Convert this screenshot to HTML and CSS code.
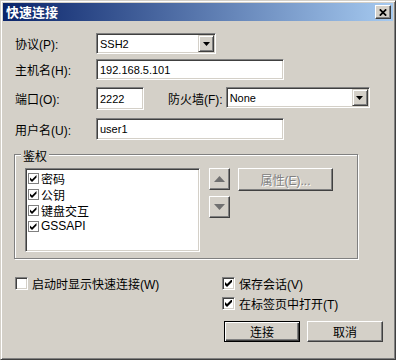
FILE: index.html
```html
<!DOCTYPE html>
<html lang="zh-CN">
<head>
    <meta charset="UTF-8">
    <title>快速连接</title>
    <link rel="stylesheet" href="styles.css">
</head>
<body>

    <div class="window">
        <div class="titlebar">
            <span class="title">快速连接</span>
            <button class="close">
                <svg width="8" height="7" viewBox="0 0 8 7"><path d="M0.8 0.3 L7.2 6.7 M7.2 0.3 L0.8 6.7" stroke="#000" stroke-width="1.7"/></svg>
            </button>
        </div>

        <div class="dialog">
            <div class="row row-protocol">
                <label class="lbl">协议(P):</label>
                <div class="combo combo-protocol">
                    <span class="combo-text">SSH2</span>
                    <span class="combo-btn"><svg width="7" height="4" viewBox="0 0 7 4"><path d="M0 0 H7 L3.5 4 Z" fill="#000"/></svg></span>
                </div>
            </div>

            <div class="row row-host">
                <label class="lbl">主机名(H):</label>
                <div class="edit edit-wide">192.168.5.101</div>
            </div>

            <div class="row row-port">
                <label class="lbl">端口(O):</label>
                <div class="edit edit-port">2222</div>
                <label class="lbl-fw">防火墙(F):</label>
                <div class="combo combo-fw">
                    <span class="combo-text">None</span>
                    <span class="combo-btn"><svg width="7" height="4" viewBox="0 0 7 4"><path d="M0 0 H7 L3.5 4 Z" fill="#000"/></svg></span>
                </div>
            </div>

            <div class="row row-user">
                <label class="lbl">用户名(U):</label>
                <div class="edit edit-wide">user1</div>
            </div>

            <div class="group">
                <span class="group-title">鉴权</span>
                <div class="listbox">
                    <div class="item"><svg class="tick" width="11" height="11" viewBox="0 0 11 11"><rect x="0.5" y="0.5" width="10" height="10" fill="#fff" stroke="#808080"/><path d="M2 4.5 L4 6.5 L8.5 2 L8.5 4.5 L4 9 L2 7 Z" fill="#000"/></svg>密码</div>
                    <div class="item"><svg class="tick" width="11" height="11" viewBox="0 0 11 11"><rect x="0.5" y="0.5" width="10" height="10" fill="#fff" stroke="#808080"/><path d="M2 4.5 L4 6.5 L8.5 2 L8.5 4.5 L4 9 L2 7 Z" fill="#000"/></svg>公钥</div>
                    <div class="item"><svg class="tick" width="11" height="11" viewBox="0 0 11 11"><rect x="0.5" y="0.5" width="10" height="10" fill="#fff" stroke="#808080"/><path d="M2 4.5 L4 6.5 L8.5 2 L8.5 4.5 L4 9 L2 7 Z" fill="#000"/></svg>键盘交互</div>
                    <div class="item"><svg class="tick" width="11" height="11" viewBox="0 0 11 11"><rect x="0.5" y="0.5" width="10" height="10" fill="#fff" stroke="#808080"/><path d="M2 4.5 L4 6.5 L8.5 2 L8.5 4.5 L4 9 L2 7 Z" fill="#000"/></svg>GSSAPI</div>
                </div>
                <div class="arrows">
                    <button class="btn btn-arrow"><svg width="11" height="6" viewBox="0 0 11 6"><path d="M0 6 H11 L5.5 0 Z" fill="#707070"/></svg></button>
                    <button class="btn btn-arrow"><svg width="11" height="6" viewBox="0 0 11 6"><path d="M0 0 H11 L5.5 6 Z" fill="#707070"/></svg></button>
                </div>
                <button class="btn btn-props" disabled>属性(E)...</button>
            </div>

            <div class="bottom">
                <div class="bottom-left">
                    <label class="check"><span class="box"></span>启动时显示快速连接(W)</label>
                </div>
                <div class="bottom-right">
                    <label class="check"><span class="box"><svg width="7" height="7" viewBox="0 0 7 7"><path d="M0 2 L2 4 L7 -1 L7 2 L2 7 L0 5 Z" fill="#000"/></svg></span>保存会话(V)</label>
                    <label class="check"><span class="box"><svg width="7" height="7" viewBox="0 0 7 7"><path d="M0 2 L2 4 L7 -1 L7 2 L2 7 L0 5 Z" fill="#000"/></svg></span>在标签页中打开(T)</label>
                    <div class="buttons">
                        <button class="btn btn-default">连接</button>
                        <button class="btn btn-cancel">取消</button>
                    </div>
                </div>
            </div>
        </div>
    </div>

</body>
</html>
```

FILE: styles.css
```css
* {
    box-sizing: border-box;
}

body {
    margin: 0;
    background-color: #d4d0c8;
    font-family: "Liberation Sans", "Noto Sans CJK SC", sans-serif;
    font-size: 12px;
    color: #000;
}

.window {
    width: 396px;
    height: 360px;
    background-color: #d4d0c8;
    border: 1px solid;
    border-color: #d4d0c8 #404040 #404040 #d4d0c8;
    box-shadow: inset 1px 1px #fff, inset -1px -1px #808080;
    padding: 2px;
}

.titlebar {
    height: 18px;
    display: flex;
    align-items: center;
    justify-content: space-between;
    padding: 0 2px 0 3px;
    background: linear-gradient(to right, #0a246a, #a6caf0);
}

.title {
    color: #fff;
    font-family: "Noto Sans CJK SC", sans-serif;
    font-weight: bold;
    font-size: 13px;
    line-height: 18px;
}

.close {
    width: 16px;
    height: 14px;
    padding: 0;
    display: flex;
    align-items: center;
    justify-content: center;
    background-color: #d4d0c8;
    border: 1px solid;
    border-color: #fff #404040 #404040 #fff;
    box-shadow: inset -1px -1px #808080;
}

.dialog {
    padding: 12px 0 0 12px;
}

.row {
    display: flex;
    align-items: center;
}

.lbl {
    width: 81px;
}

.row-protocol {
    height: 21px;
}

.row-host {
    height: 21px;
    margin-top: 5px;
}

.row-port {
    height: 23px;
    margin-top: 7px;
    align-items: flex-start;
}

.row-port .lbl,
.row-port .lbl-fw {
    align-self: center;
}

.row-user {
    height: 22px;
    margin-top: 8px;
}

.edit,
.combo,
.listbox,
.box {
    background-color: #fff;
    border: 1px solid;
    border-color: #808080 #fff #fff #808080;
    box-shadow: inset 1px 1px #404040, inset -1px -1px #d4d0c8;
}

.edit {
    height: 100%;
    display: flex;
    align-items: center;
    padding: 0 3px;
    font-size: 11px;
}

.edit-wide {
    width: 188px;
}

.edit-port {
    width: 48px;
}

.lbl-fw {
    margin-left: 24px;
    margin-right: 3px;
}

.combo {
    height: 21px;
    display: flex;
    align-items: center;
    padding: 1px 1px 1px 3px;
    font-size: 11px;
}

.combo-protocol {
    width: 120px;
}

.combo-fw {
    width: 144px;
}

.combo-btn {
    width: 16px;
    height: 17px;
    margin-left: auto;
    display: flex;
    align-items: center;
    justify-content: center;
    background-color: #d4d0c8;
    border: 1px solid;
    border-color: #d4d0c8 #404040 #404040 #d4d0c8;
    box-shadow: inset 1px 1px #fff, inset -1px -1px #808080;
}

.group {
    position: relative;
    width: 344px;
    height: 105px;
    margin: 14px 0 0 -1px;
    padding: 13px 0 0 10px;
    display: flex;
    align-items: flex-start;
    border: 1px solid #808080;
    box-shadow: inset 1px 1px #fff, 1px 1px #fff;
}

.group-title {
    position: absolute;
    top: -5px;
    left: 6px;
    padding: 0 2px;
    line-height: 14px;
    background-color: #d4d0c8;
}

.listbox {
    width: 175px;
    height: 84px;
    padding: 1px 0 0 2px;
}

.item {
    height: 16px;
    display: flex;
    align-items: center;
    gap: 2px;
}

.btn {
    padding: 0;
    font: inherit;
    color: #000;
    background-color: #d4d0c8;
    border: 1px solid;
    border-color: #fff #404040 #404040 #fff;
    box-shadow: inset -1px -1px #808080;
    display: flex;
    align-items: center;
    justify-content: center;
}

.arrows {
    display: flex;
    flex-direction: column;
    gap: 6px;
    margin-left: 9px;
}

.btn-arrow {
    width: 21px;
    height: 22px;
}

.btn-props {
    width: 95px;
    height: 23px;
    margin-left: 8px;
    color: #808080;
    text-shadow: 1px 1px #fff;
}

.bottom {
    display: flex;
    margin-top: 18px;
}

.bottom-left {
    width: 207px;
}

.bottom-right {
    display: flex;
    flex-direction: column;
    gap: 7px;
}

.check {
    height: 13px;
    display: flex;
    align-items: center;
    gap: 4px;
    white-space: nowrap;
}

.box {
    width: 13px;
    height: 13px;
    flex: none;
    display: flex;
    align-items: center;
    justify-content: center;
}

.buttons {
    display: flex;
    gap: 7px;
    margin: 4px 0 0 2px;
}

.btn-default,
.btn-cancel {
    width: 76px;
    height: 21px;
}

.btn-default {
    border: 1px solid #000;
    box-shadow: inset 1px 1px #fff, inset -1px -1px #404040, inset -2px -2px #808080;
}
```
